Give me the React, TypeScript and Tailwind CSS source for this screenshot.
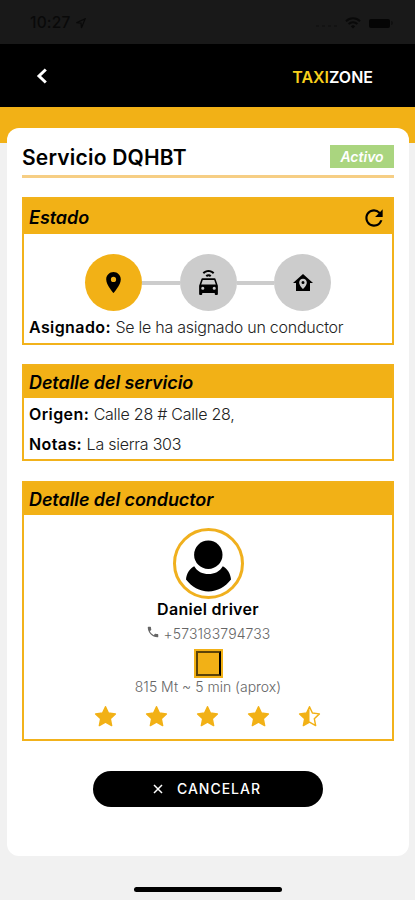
import React from 'react';
import { MdLocationOn, MdPhone, MdRefresh } from 'react-icons/md';

const StatusBar = () => (
  <div className="h-11 bg-[#191919] flex items-center justify-between pl-[30px] pr-[22px] pt-[2px] text-[#090909]">
    <div className="flex items-center gap-1">
      <span className="text-[15.5px] leading-none font-medium tracking-[0.2px]">10:27</span>
      <svg width="11" height="11" viewBox="0 0 12 12" fill="none" stroke="currentColor" strokeWidth="1.3">
        <path d="M11 1 1.5 5.2 6.6 5.6 7 10.8Z" />
      </svg>
    </div>
    <div className="flex items-center gap-2">
      <div className="flex gap-[3px] pt-1.5">
        <span className="w-[3px] h-[2px] bg-[#131313]" />
        <span className="w-[3px] h-[2px] bg-[#131313]" />
        <span className="w-[3px] h-[2px] bg-[#131313]" />
        <span className="w-[3px] h-[2px] bg-[#131313]" />
      </div>
      <svg width="16" height="12" viewBox="0 0 16 12" fill="none" stroke="currentColor" strokeWidth="2">
        <path d="M1 4.2a10 10 0 0 1 14 0M3.6 7a6.3 6.3 0 0 1 8.8 0" />
        <path d="M8 11.5 5.8 9.3a3.2 3.2 0 0 1 4.4 0Z" fill="currentColor" stroke="none" />
      </svg>
      <div className="flex items-center gap-px">
        <span className="w-[21px] h-[9px] rounded-[2px] bg-[#050505]" />
        <span className="w-[2px] h-1 rounded-r bg-[#101010]" />
      </div>
    </div>
  </div>
);

const Header = () => (
  <header className="h-[63px] bg-black flex items-center justify-between pl-[36px] pr-[42px]">
    <svg width="12" height="16" viewBox="0 0 12 16" fill="none" stroke="#fff" strokeWidth="3">
      <path d="M9.8 1.500 3 8l6.8 6.500" />
    </svg>
    <div className="text-[16px] font-semibold leading-none pt-0.5 text-white">
      <span className="text-[#f8cf1c]">TAXI</span>ZONE
    </div>
  </header>
);

interface PanelProps {
  title: string;
  headerClass: string;
  className: string;
  action?: React.ReactNode;
  children: React.ReactNode;
}

const Panel: React.FC<PanelProps> = ({ title, headerClass, className, action, children }) => (
  <section className={`border-2 border-[#f2b21b] ${className}`}>
    <div className={`bg-[#f2b116] flex items-center justify-between pl-[5px] pr-[5px] ${headerClass}`}>
      <h2 className="text-[18px] leading-none font-semibold italic tracking-[-0.08px]">{title}</h2>
      {action}
    </div>
    {children}
  </section>
);

interface StepProps {
  active?: boolean;
  children: React.ReactNode;
}

const Step: React.FC<StepProps> = ({ active, children }) => (
  <div className={`w-[57px] h-[57px] rounded-full flex items-center justify-center ${active ? 'bg-[#f2b116]' : 'bg-[#cccccc]'}`}>
    {children}
  </div>
);

const CarConnectedIcon = () => (
  <svg width="25" height="25" viewBox="0 0 24 24" fill="currentColor">
    <path d="M5,14H19L17.5,9.5H6.5L5,14M17.5,19A1.5,1.5 0 0,0 19,17.5A1.5,1.5 0 0,0 17.5,16A1.5,1.5 0 0,0 16,17.5A1.5,1.5 0 0,0 17.5,19M6.5,19A1.5,1.5 0 0,0 8,17.5A1.5,1.5 0 0,0 6.5,16A1.5,1.5 0 0,0 5,17.5A1.5,1.5 0 0,0 6.5,19M18.92,9L21,15V23A1,1 0 0,1 20,24H19A1,1 0 0,1 18,23V22H6V23A1,1 0 0,1 5,24H4A1,1 0 0,1 3,23V15L5.08,9C5.28,8.42 5.85,8 6.5,8H17.5C18.15,8 18.72,8.42 18.92,9M12,0C14.12,0 16.15,0.86 17.65,2.35L16.23,3.77C15.11,2.65 13.58,2 12,2C10.42,2 8.89,2.65 7.77,3.77L6.36,2.35C7.85,0.86 9.88,0 12,0M12,4C13.06,4 14.07,4.44 14.82,5.18L13.4,6.6C13.03,6.23 12.53,6 12,6C11.5,6 10.97,6.23 10.6,6.6L9.18,5.18C9.93,4.44 10.94,4 12,4Z" />
  </svg>
);

const HomeMarkerIcon = () => (
  <svg width="24" height="24" viewBox="0 0 24 24" fill="currentColor">
    <path d="M12,3L2,12H5V20H19V12H22L12,3M12,7.7C14.1,7.7 15.8,9.4 15.8,11.5C15.8,14.5 12,18 12,18C12,18 8.2,14.5 8.2,11.5C8.2,9.4 9.9,7.7 12,7.7M12,10A1.5,1.5 0 0,0 10.5,11.5A1.5,1.5 0 0,0 12,13A1.5,1.5 0 0,0 13.5,11.5A1.5,1.5 0 0,0 12,10Z" />
  </svg>
);

const Avatar = () => (
  <div className="w-[71px] h-[71px] rounded-full border-[3px] border-[#f0b01e] flex items-center justify-center">
    <svg width="65" height="65" viewBox="0 0 65 65">
      <circle cx="32.3" cy="23.8" r="14.2" />
      <path d="M18.2 35.2c3 5.300 8.400 7.800 14.300 7.800s11.300-2.500 14.300-7.800c4.600 2.500 7.700 7.100 8.200 13.400-5.600 7.300-13.600 11.900-22.500 11.900S15.600 55.900 10 48.600c.5-6.300 3.600-10.900 8.200-13.400Z" />
    </svg>
  </div>
);

const Star: React.FC<{ half?: boolean }> = ({ half }) => (
  <svg width="25" height="25" viewBox="0 0 24 24" fill="currentColor" stroke="currentColor" strokeWidth="1.4" strokeLinejoin="round">
    <path
      d="M12 2.600 14.8 8.700 21.500 9.500 16.600 14.100 17.900 20.700 12 17.400 6.100 20.700 7.400 14.100 2.500 9.500 9.200 8.700Z"
      fill={half ? 'none' : 'currentColor'}
    />
    {half && <path d="M12 2.600V17.400L6.100 20.700 7.400 14.100 2.500 9.500 9.200 8.700Z" stroke="none" />}
  </svg>
);

const Field: React.FC<{ label: string; value: string; className?: string }> = ({ label, value, className = '' }) => (
  <p className={`pl-[5px] text-[16px] leading-5 whitespace-nowrap ${className}`}>
    <span className="font-semibold tracking-[0.4px]">{label}</span>{' '}
    <span className="font-light text-[#222] tracking-[-0.25px]">{value}</span>
  </p>
);

export default function App() {
  return (
    <div className="w-[415px] h-[900px] overflow-hidden flex flex-col bg-[#f1f1f1] text-black font-['Inter','Liberation_Sans',sans-serif]">
      <StatusBar />
      <Header />
      <div className="h-9 shrink-0 bg-[#f2b116]" />

      <main className="h-[728px] shrink-0 -mt-[15px] ml-[7px] mr-1.5 rounded-xl bg-white px-[15px] pt-[17px] flex flex-col">
        <div className="h-[33px] shrink-0 flex justify-between border-b-[3px] border-[#f6ce84]">
          <h1 className="text-[21px] leading-[25px] font-semibold tracking-[0.2px]">Servicio DQHBT</h1>
          <span className="w-16 h-[23px] bg-[#aad57f] text-white text-[14px] leading-[23px] font-semibold italic text-center">Activo</span>
        </div>

        <Panel
          title="Estado"
          className="mt-[19px] h-[148px] shrink-0"
          headerClass="h-[35px] pt-0.5"
          action={<MdRefresh className="w-[26px] h-[26px]" />}
        >
          <div className="flex items-center justify-center mt-5">
            <Step active><MdLocationOn className="w-[25px] h-[25px]" /></Step>
            <span className="w-[37.5px] h-1 bg-[#cccccc]" />
            <Step><CarConnectedIcon /></Step>
            <span className="w-[37.5px] h-1 bg-[#cccccc]" />
            <Step><HomeMarkerIcon /></Step>
          </div>
          <Field className="mt-[6px]" label="Asignado:" value="Se le ha asignado un conductor" />
        </Panel>

        <Panel title="Detalle del servicio" className="mt-[19px] h-[97px] shrink-0" headerClass="h-8 pt-0.5">
          <Field className="mt-1.5" label="Origen:" value="Calle 28 # Calle 28," />
          <Field className="mt-[10px]" label="Notas:" value="La sierra 303" />
        </Panel>

        <Panel title="Detalle del conductor" className="mt-5 h-[260px] shrink-0" headerClass="h-8 pt-0.5">
          <div className="flex flex-col items-center pt-[13px]">
            <Avatar />
            <p className="text-[16px] leading-5 font-semibold tracking-[0.3px]">Daniel driver</p>
            <p className="mt-[5px] flex items-center gap-1 text-[14px] leading-5 font-light text-[#666]">
              <MdPhone className="w-[14px] h-[14px] -mt-1" />
              <span className="tracking-[0.1px]">+573183794733</span>
            </p>
            <div className="mt-[5px] w-[29px] h-[29px] bg-[#f2b116] p-0.5">
              <div className="w-full h-full border-2 border-[#5c4308] border-r-black" />
            </div>
            <p className="text-[14px] leading-[18px] font-light text-[#666]">815 Mt ~ 5 min (aprox)</p>
            <div className="mt-2 flex gap-[26px] pr-px text-[#f2b116]">
              <Star />
              <Star />
              <Star />
              <Star />
              <Star half />
            </div>
          </div>
        </Panel>

        <button className="mt-[30px] self-center w-[230px] h-9 rounded-full bg-black text-white flex items-center justify-center gap-[14px] pr-0.5">
          <svg width="10" height="10" viewBox="0 0 10 10" stroke="currentColor" strokeWidth="1.5">
            <path d="m1 1 8 8M9 1 1 9" />
          </svg>
          <span className="text-[14px] leading-none font-medium tracking-[1px]">CANCELAR</span>
        </button>
      </main>

      <div className="mt-[31px] h-[5px] w-[148px] shrink-0 self-center rounded-full bg-black" />
    </div>
  );
}
